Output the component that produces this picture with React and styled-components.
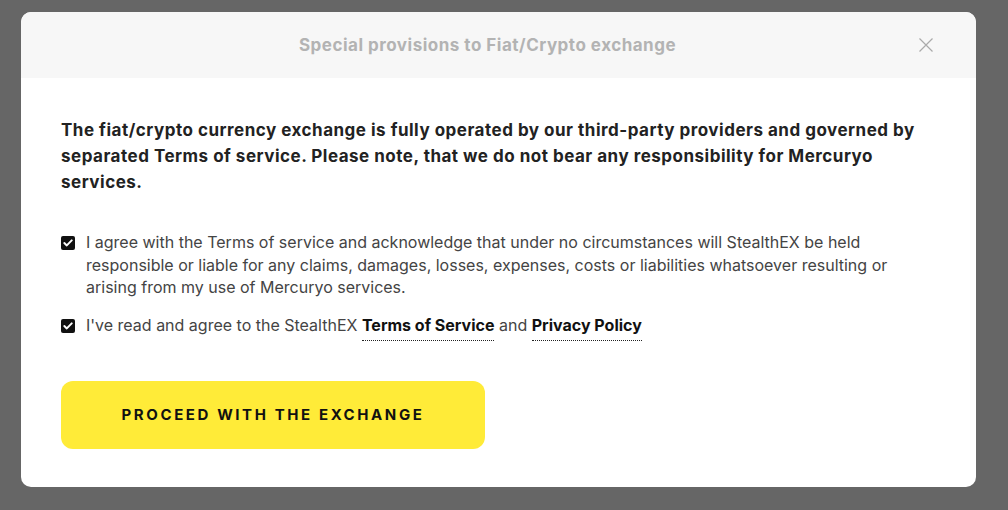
import React from 'react';
import styled, { createGlobalStyle } from 'styled-components';

const GlobalStyle = createGlobalStyle`
	html, body {
		margin: 0;
		background: #666666;
		font-family: Inter, "Noto Sans", sans-serif;
	}
	* {
		box-sizing: border-box;
	}
`;

const Page = styled.div`
	min-height: 510px;
	padding: 12px 0 0 21px;
`;

const Modal = styled.div`
	width: 955px;
	background: #fff;
	border-radius: 10px;
	overflow: hidden;
`;

const Header = styled.div`
	height: 66px;
	background: #f7f7f7;
	display: grid;
	grid-template-columns: 1fr 14px;
	align-items: center;
	column-gap: 5px;
	padding: 0 43px 0 40px;
`;

const Title = styled.h2`
	margin: 0;
	text-align: center;
	font-size: 17px;
	letter-spacing: 0.5px;
	font-weight: 700;
	color: #b3b3b3;
`;

const CloseButton = styled.button`
	width: 14px;
	height: 14px;
	padding: 0;
	border: 0;
	background: none;
	display: flex;
	cursor: pointer;
`;

const Body = styled.div`
	padding: 39px 40px 38px;
`;

const Lead = styled.p`
	margin: 0 0 36px;
	font-size: 17px;
	line-height: 26px;
	font-weight: 700;
	letter-spacing: 0.5px;
	color: #222;
`;

const Options = styled.div`
	display: flex;
	flex-direction: column;
	gap: 15px;
`;

const Option = styled.label`
	display: flex;
	gap: 11px;
	font-size: 16px;
	line-height: 22.5px;
	color: #444;
	cursor: pointer;
`;

const Box = styled.span`
	flex: none;
	width: 14px;
	height: 14px;
	margin-top: 5px;
	border-radius: 2px;
	background: #111;
	display: flex;
	align-items: center;
	justify-content: center;
`;

const Link = styled.a`
	display: inline-block;
	padding-bottom: 4px;
	border-bottom: 1px dotted #222;
	color: #111;
	font-weight: 700;
	text-decoration: none;
	line-height: 22px;
`;

const Proceed = styled.button`
	margin-top: 40px;
	width: 424px;
	height: 68px;
	border: 0;
	border-radius: 12px;
	background: #ffeb38;
	color: #111;
	font-family: Inter, "Noto Sans", sans-serif;
	font-size: 15px;
	font-weight: 700;
	letter-spacing: 2.6px;
	text-transform: uppercase;
	cursor: pointer;
`;

const Check = () => (
	<svg width="10" height="8" viewBox="0 0 10 8">
		<path d="M1.3 4.1 L3.8 6.4 L8.7 1.4" fill="none" stroke="#fff" strokeWidth="2" strokeLinecap="round" strokeLinejoin="round" />
	</svg>
);

const App = () => (
	<Page>
		<GlobalStyle />
		<Modal>
			<Header>
				<Title>Special provisions to Fiat/Crypto exchange</Title>
				<CloseButton aria-label="Close">
					<svg width="14" height="14" viewBox="0 0 14 14">
						<path d="M0.5 0.5 L13.5 13.5 M13.5 0.5 L0.5 13.5" stroke="#aaa" strokeWidth="1.2" />
					</svg>
				</CloseButton>
			</Header>
			<Body>
				<Lead>
					The fiat/crypto currency exchange is fully operated by our third-party providers and governed by
					separated Terms of service. Please note, that we do not bear any responsibility for Mercuryo services.
				</Lead>
				<Options>
					<Option>
						<Box><Check /></Box>
						<span>
							I agree with the Terms of service and acknowledge that under no circumstances will StealthEX be held
							responsible or liable for any claims, damages, losses, expenses, costs or liabilities whatsoever resulting or
							arising from my use of Mercuryo services.
						</span>
					</Option>
					<Option>
						<Box><Check /></Box>
						<span>
							I've read and agree to the StealthEX <Link href="#">Terms of Service</Link> and{' '}
							<Link href="#">Privacy Policy</Link>
						</span>
					</Option>
				</Options>
				<Proceed>Proceed with the exchange</Proceed>
			</Body>
		</Modal>
	</Page>
);

export default App;
